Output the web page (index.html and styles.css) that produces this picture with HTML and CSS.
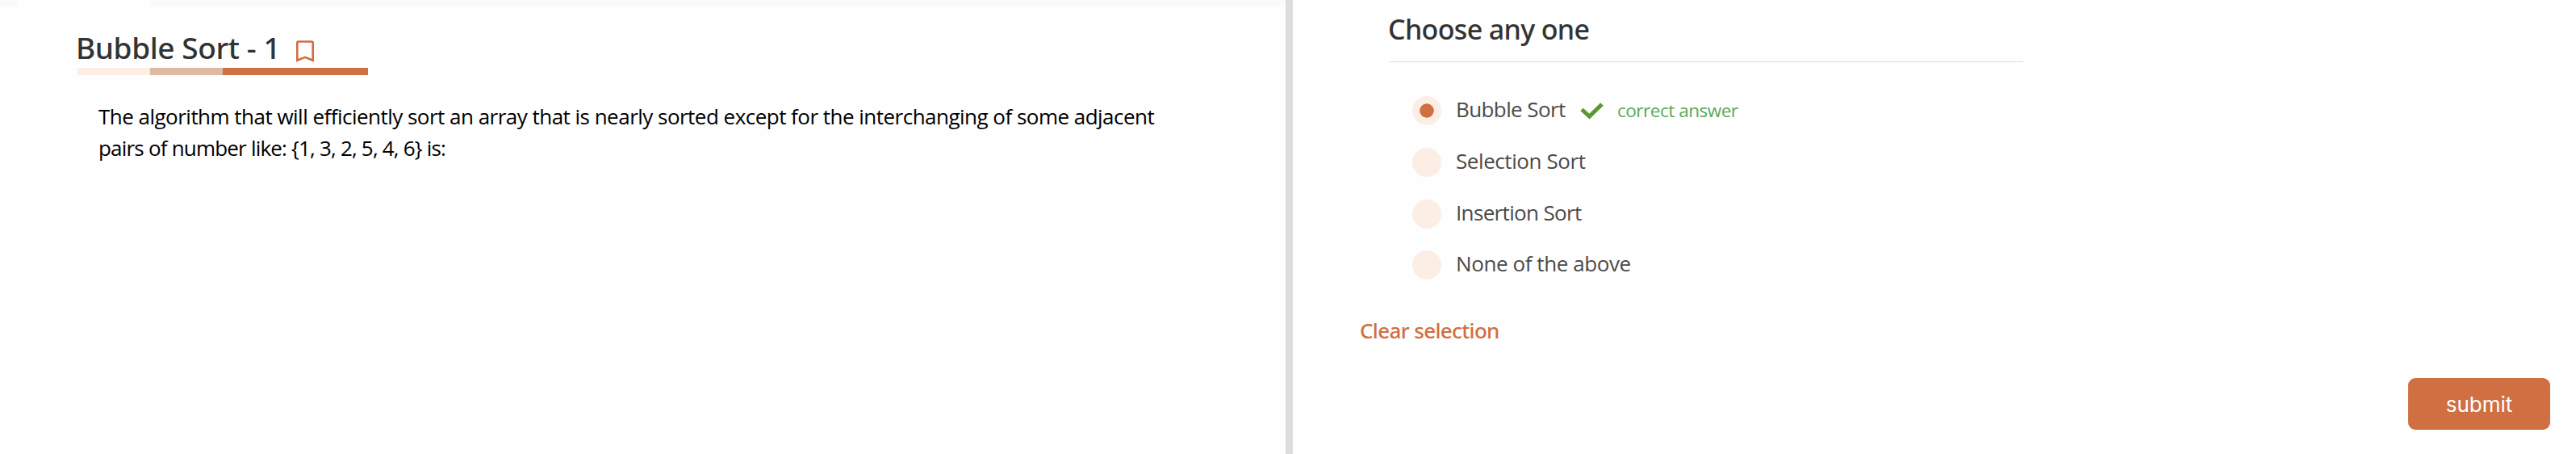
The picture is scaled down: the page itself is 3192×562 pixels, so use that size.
FILE: index.html
```html
<!DOCTYPE html>
<html lang="en">
<head>
<meta charset="utf-8">
<title>Bubble Sort - 1</title>
<link rel="stylesheet" href="styles.css">
</head>
<body>
<div class="layout">
  <main class="problem">
    <div class="tabs"><div class="tab-active"></div></div>
    <header class="problem-header">
      <h1 class="title"><span class="title-text">Bubble Sort - 1</span>
        <svg class="bookmark" viewBox="0 0 22 27" width="22" height="27"><path d="M1.300 24.800V3Q1.300 1.500 2.800 1.500H19.200Q20.700 1.500 20.700 3V24.800L11 20.800Z" fill="none" stroke="#d06f42" stroke-width="2.600"/></svg>
      </h1>
      <div class="rule"><i class="rule-light"></i><i class="rule-mid"></i><i class="rule-dark"></i></div>
    </header>
    <p class="statement">The algorithm that will efficiently sort an array that is nearly sorted except for the interchanging of some adjacent<br><span class="statement-end">pairs of number like: {1, 3, 2, 5, 4, 6} is:</span></p>
  </main>
  <div class="divider"></div>
  <section class="answers">
    <h2 class="prompt">Choose any one</h2>
    <ul class="options">
      <li class="option"><span class="radio checked"></span><span class="label label-answer">Bubble Sort</span>
        <svg class="check" viewBox="0 0 29 21" width="29" height="21"><path d="M2 8.500L11.500 17L27 2" fill="none" stroke="#57992f" stroke-width="5"/></svg>
        <span class="correct">correct answer</span></li>
      <li class="option"><span class="radio"></span><span class="label">Selection Sort</span></li>
      <li class="option"><span class="radio"></span><span class="label label-tight">Insertion Sort</span></li>
      <li class="option"><span class="radio"></span><span class="label">None of the above</span></li>
    </ul>
    <a class="clear">Clear selection</a>
    <button class="submit" type="button">submit</button>
  </section>
</div>
</body>
</html>
```
FILE: styles.css
```css
* { box-sizing: border-box; }
body {
  margin: 0;
  background: #fefefe;
  font-family: "Open Sans", "Noto Sans", sans-serif;
  color: #333;
}
.layout { display: flex; width: 3192px; height: 562px; overflow: hidden; }
.problem { width: 1593px; }
.tabs { height: 8px; background: #fafafa; padding-left: 23px; }
.tab-active { width: 162px; height: 8px; background: #fefefe; }
.problem-header { padding: 26px 0 0 96px; }
.title, .prompt, .clear {
  font-family: "Noto Sans", sans-serif;
  font-weight: 500;
}
.title {
  margin: 0;
  height: 50px;
  display: flex;
  font-size: 37px;
  line-height: 50px;
  white-space: nowrap;
}
.title-text {
  width: 271px;
  text-indent: -2px;
  letter-spacing: -0.4px;
}
.bookmark { margin-top: 16px; }
.rule { display: flex; width: 360px; height: 9px; }
.rule-light { width: 90px; background: #fceee5; }
.rule-mid { width: 90px; background: #dfbaa3; }
.rule-dark { width: 180px; background: #d06f42; }
.statement {
  margin: 32px 0 0 122px;
  font-size: 26px;
  line-height: 39px;
  color: #000;
  white-space: nowrap;
  letter-spacing: -0.52px;
}
.statement-end { letter-spacing: -0.8px; }
.divider { width: 9px; background: #ddd; }
.answers {
  width: 1590px;
  display: flex;
  flex-direction: column;
}
.prompt {
  margin: 0 0 0 119px;
  width: 786px;
  height: 77px;
  border-bottom: 1px solid #ddd;
  padding-top: 12px;
  font-size: 34px;
  line-height: 48px;
  letter-spacing: -0.65px;
  text-indent: -1px;
}
.options {
  list-style: none;
  margin: 28.3px 0 0 148px;
  padding: 0;
}
.option {
  display: flex;
  align-items: center;
  height: 63.7px;
  font-size: 26px;
  color: #4a4a4a;
  white-space: nowrap;
}
.radio {
  width: 36px;
  height: 36px;
  margin-right: 18px;
  border-radius: 50%;
  background: #fceee5;
}
.checked { border: 9px solid #fceee5; background: #d06f42; background-clip: padding-box; }
.label {
  line-height: 36px;
  padding-bottom: 4px;
  letter-spacing: -0.42px;
}
.label-answer { width: 136px; letter-spacing: -0.6px; }
.label-tight { letter-spacing: -0.65px; }
.check { margin: 1px 0 0 18px; }
.correct {
  margin-left: 17px;
  padding-bottom: 1px;
  font-size: 22.5px;
  letter-spacing: -0.48px;
  color: #5aa958;
}
.clear {
  margin: 28.8px 0 0 83px;
  font-size: 26px;
  line-height: 40px;
  letter-spacing: -0.65px;
  color: #d06f42;
}
.submit {
  align-self: flex-end;
  width: 176px;
  height: 64px;
  margin: 39.1px 32px 0 0;
  padding: 2px 0 0;
  border: 0;
  border-radius: 9px;
  background: #d06f42;
  color: #fff;
  font-family: Inter, sans-serif;
  font-size: 26px;
}
```
